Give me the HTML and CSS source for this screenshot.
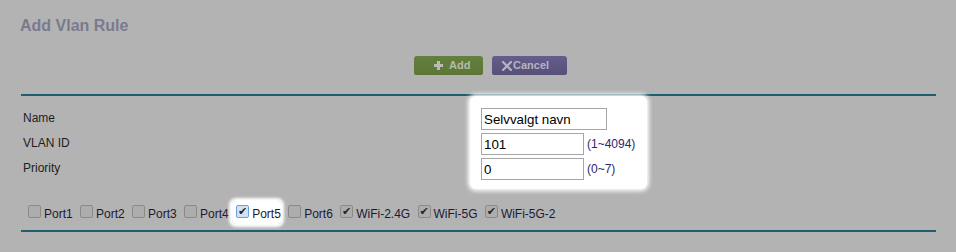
FILE: index.html
```html
<!DOCTYPE html>
<html>
<head>
<meta charset="utf-8">
<link rel="stylesheet" href="styles.css">
</head>
<body>
<div class="page">
  <h1 class="title">Add Vlan Rule</h1>
  <div class="actions">
    <button class="btn btn-add" type="button"><svg class="ico" width="9" height="9" viewBox="0 0 9 9"><rect x="3" y="0" width="3" height="9" fill="#b9bdb1"/><rect x="0" y="3" width="9" height="3" fill="#b9bdb1"/></svg><span>Add</span></button>
    <button class="btn btn-cancel" type="button"><svg class="ico" width="10" height="10" viewBox="0 0 10 10"><path d="M1 1L9 9M9 1L1 9" stroke="#b7b5c2" stroke-width="2.2" stroke-linecap="square"/></svg><span>Cancel</span></button>
  </div>
  <div class="rule"></div>
  <div class="form">
    <div class="labels">
      <div class="lbl">Name</div>
      <div class="lbl">VLAN ID</div>
      <div class="lbl">Priority</div>
    </div>
    <div class="values">
      <div class="vrow"><input class="field field-wide" type="text" value="Selvvalgt navn"></div>
      <div class="vrow"><input class="field" type="text" value="101"><span class="range">(1~4094)</span></div>
      <div class="vrow"><input class="field" type="text" value="0"><span class="range">(0~7)</span></div>
    </div>
  </div>
  <div class="ports"><label class="port"><input class="cb" type="checkbox">Port1</label> <label class="port"><input class="cb" type="checkbox">Port2</label> <label class="port"><input class="cb" type="checkbox">Port3</label> <label class="port"><input class="cb" type="checkbox">Port4</label> <label class="port spot"><input class="cb cb-focus" type="checkbox" checked>Port5</label> <label class="port"><input class="cb" type="checkbox">Port6</label> <label class="port"><input class="cb" type="checkbox" checked>WiFi-2.4G</label> <label class="port"><input class="cb" type="checkbox" checked>WiFi-5G</label> <label class="port"><input class="cb" type="checkbox" checked>WiFi-5G-2</label></div>
  <div class="rule rule-bottom"></div>
</div>
</body>
</html>
```

FILE: styles.css
```css
html, body {
  margin: 0;
  padding: 0;
  background: #b3b3b3;
  font-family: "Liberation Sans", Arial, sans-serif;
}

.page {
  padding: 16px 20px 0 20px;
}

.title {
  margin: 0;
  font-size: 16px;
  line-height: 20px;
  font-weight: bold;
  color: #7a7a8e;
}

.actions {
  display: flex;
  gap: 9px;
  margin-top: 20px;
  padding-left: 394px;
}

.btn {
  display: flex;
  align-items: center;
  height: 19px;
  border: 0;
  margin: 0;
  border-radius: 3px 3px 2px 2px;
  font-family: "Liberation Sans", Arial, sans-serif;
  font-size: 11px;
  font-weight: bold;
  line-height: 19px;
  box-sizing: border-box;
}

.btn-add {
  width: 69px;
  padding: 0 0 0 20px;
  background: linear-gradient(#64803d, #5b7636);
  color: #b6baae;
  gap: 6px;
}

.btn-cancel {
  width: 75px;
  padding: 0 0 0 10px;
  background: linear-gradient(#655d8c, #565079);
  color: #b6b4c2;
  gap: 1px;
}

.ico {
  display: block;
  flex: none;
}

.rule {
  height: 2px;
  margin: 19px 0 0 1px;
  background: #1f5e6e;
}

.rule-bottom {
  margin-top: 6px;
}

.form {
  display: flex;
}

.labels {
  width: 450px;
  padding: 10px 0 0 3px;
  box-sizing: border-box;
}

.lbl {
  font-size: 12px;
  line-height: 25px;
  color: #1e1e1e;
}

.values {
  width: 177px;
  box-sizing: border-box;
  padding: 12px 0 9px 11px;
  background: #fff;
  border-radius: 6px;
  box-shadow: 0 0 4px 2px #fff;
  display: flex;
  flex-direction: column;
  gap: 3px;
}

.vrow {
  display: flex;
  align-items: center;
  gap: 3px;
  height: 22px;
}

.field {
  width: 103px;
  height: 22px;
  box-sizing: border-box;
  border: 1px solid #a6a6a6;
  padding: 1px 2px;
  margin: 0;
  font-family: "Liberation Sans", Arial, sans-serif;
  font-size: 13.333px;
  color: #000;
  background: #fff;
}

.field-wide {
  width: 126px;
}

.range {
  font-size: 12px;
  color: #2d2670;
}

.ports {
  margin-top: 15px;
  padding-left: 4px;
  font-size: 12px;
  line-height: 20px;
  color: #1b1a33;
}

.spot {
  background: #fff;
  padding: 6px 0 3px 0;
  border-radius: 4px;
  box-shadow: 0 0 3px 3px #fff;
}

.cb {
  appearance: none;
  -webkit-appearance: none;
  display: inline-block;
  overflow: hidden;
  width: 13px;
  height: 13px;
  box-sizing: border-box;
  margin: 0 3px 0 4px;
  border: 1px solid #8a8a8a;
  border-radius: 2px;
  background: #adadad;
  vertical-align: 0;
}

.cb:checked::after {
  content: "\2714";
  display: block;
  text-align: center;
  font-family: "DejaVu Sans", sans-serif;
  font-size: 11px;
  line-height: 11px;
  color: #262626;
}

.cb-focus {
  border-color: #6f9fd8;
  background: #d3e2f2;
}
```
